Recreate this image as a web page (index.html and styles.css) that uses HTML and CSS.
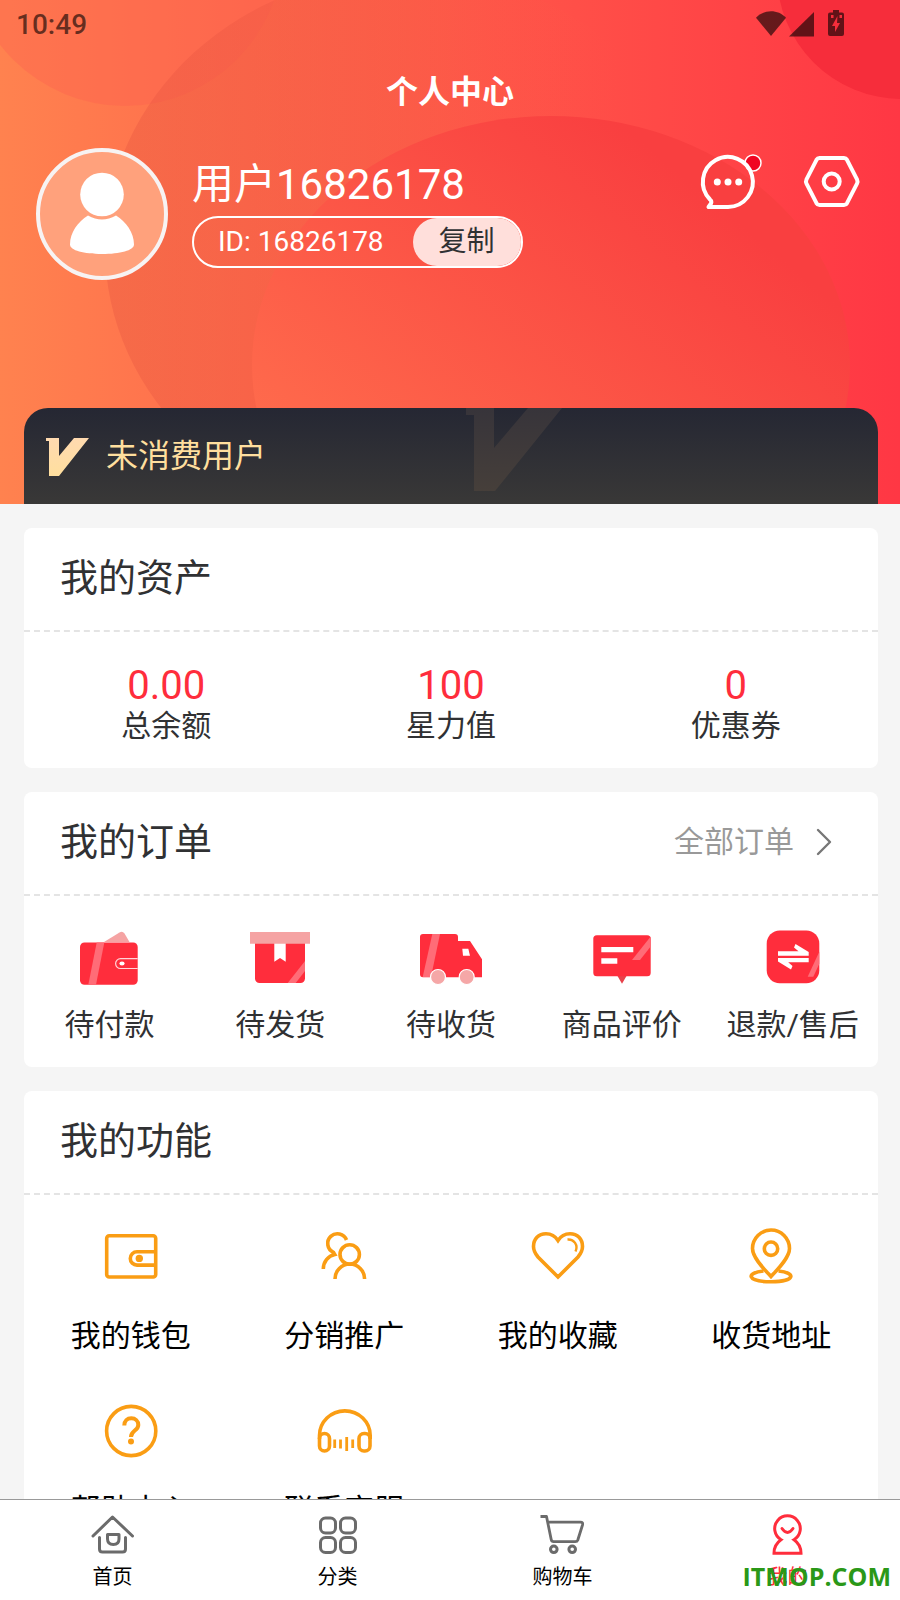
FILE: index.html
```
<!DOCTYPE html>
<html lang="zh-CN">
<head>
  <meta charset="UTF-8">
  <title>个人中心</title>
  <meta name="viewport" content="width=device-width, initial-scale=1.0">
  <link rel="stylesheet" href="styles.css">
</head>
<body>

  <div class="app">
    <main class="page">

      <header class="hero">
        <svg class="hero-bg" viewBox="0 0 900 504" preserveAspectRatio="none" aria-hidden="true">
          <defs>
            <linearGradient id="ring" x1="0" y1="0" x2="1" y2="0">
              <stop offset="0" stop-color="#e4523f" stop-opacity=".34"/>
              <stop offset=".5" stop-color="#f55a44" stop-opacity=".4"/>
              <stop offset=".85" stop-color="#ff5548" stop-opacity="0"/>
            </linearGradient>
            <linearGradient id="disc" x1=".1" y1=".8" x2=".75" y2=".15">
              <stop offset="0" stop-color="#ff6e4d"/>
              <stop offset="1" stop-color="#f93f40"/>
            </linearGradient>
          </defs>
          <circle cx="125" cy="-52" r="158" fill="#fb5f50" fill-opacity=".35"/>
          <ellipse cx="408" cy="248" rx="303" ry="276" fill="url(#ring)"/>
          <ellipse cx="551" cy="365" rx="299" ry="249" fill="url(#disc)"/>
          <circle cx="902" cy="-26" r="125" fill="#f62d3b"/>
        </svg>

        <div class="status">
          <span>10:49</span>
          <svg width="92" height="32" viewBox="754 8 92 32" aria-hidden="true">
            <path d="M771 36l-15-18.3c8-8.6 22-8.6 30 0z"/>
            <path d="M789 36.5h25V12z"/>
            <path fill-rule="evenodd" d="M833 10h6v2.500h3a2 2 0 0 1 2 2V34a2 2 0 0 1-2 2h-12a2 2 0 0 1-2-2V14.500a2 2 0 0 1 2-2h3zM831 15v3h2.500v-3zM839.500 15v3h2.500v-3zM837.500 16l-5.500 10h3v6l5-9h-3z"/>
          </svg>
        </div>

        <h1>个人中心</h1>

        <div class="user">
          <svg class="avatar" viewBox="0 0 132 132" role="img" aria-label="头像">
            <circle cx="66" cy="66" r="64" fill="#ffa17c" stroke="#f7f3f3" stroke-width="4"/>
            <circle cx="66" cy="46.500" r="21.800" fill="#fff"/>
            <path d="M52 67.500q14 8 28 0c10 6 18 17 18 29 0 6-14 9.500-32 9.500s-32-3.500-32-9.500c0-12 8-23 18-29z" fill="#fff"/>
          </svg>
          <div class="info">
            <div class="name">用户16826178</div>
            <div class="uid">
              <span>ID: 16826178</span>
              <button type="button">复制</button>
            </div>
          </div>
          <div class="actions">
            <a href="#" aria-label="消息">
              <svg width="64" height="64" viewBox="0 0 64 64" fill="none" stroke="#fff" stroke-width="4" stroke-linejoin="round">
                <circle cx="55" cy="13" r="8" fill="#f00522" stroke-width="1.500"/>
                <path d="M30 57a25 25 0 1 0-18-7.500q2 1.500 1 4l-2.500 3.500z"/>
                <g fill="#fff" stroke="none">
                  <circle cx="19.300" cy="32" r="3.500"/>
                  <circle cx="30" cy="32" r="3.500"/>
                  <circle cx="40.700" cy="32" r="3.500"/>
                </g>
              </svg>
            </a>
            <a href="#" aria-label="设置">
              <svg width="64" height="64" viewBox="0 0 64 64" fill="none" stroke="#fff" stroke-width="4" stroke-linejoin="round">
                <path d="M19.500 8h24.500q2 0 3 1.800l10 19.500q1 2.200 0 4.400l-10 19.500q-1 1.800-3 1.800h-24.500q-2 0-3-1.800l-10-19.500q-1-2.200 0-4.400l10-19.500q1-1.800 3-1.800z"/>
                <circle cx="31.700" cy="31.500" r="8"/>
              </svg>
            </a>
          </div>
        </div>

        <div class="vip">
          <svg class="vip-mark" width="96" height="83" viewBox="0 0 96 83" aria-hidden="true">
            <defs>
              <linearGradient id="mark" x1="0" y1="0" x2="0" y2="1">
                <stop offset="0" stop-color="#37343a"/>
                <stop offset="1" stop-color="#463f3a"/>
              </linearGradient>
              <linearGradient id="gold" x1="0" y1="0" x2="0" y2="1">
                <stop offset="0" stop-color="#ffdab0"/>
                <stop offset="1" stop-color="#ffdf9e"/>
              </linearGradient>
            </defs>
            <path d="M0 0h28v40L62 0h34L29 83H8V7H0z" fill="url(#mark)"/>
          </svg>
          <svg width="44" height="38" viewBox="0 0 44 38" aria-hidden="true">
            <path d="M0 0h13v18L28 0h15L13 38H3V3H0z" fill="url(#gold)"/>
          </svg>
          <span>未消费用户</span>
        </div>
      </header>

      <section class="card">
        <div class="card-head"><h2>我的资产</h2></div>
        <div class="assets">
          <div><strong>0.00</strong><span>总余额</span></div>
          <div><strong>100</strong><span>星力值</span></div>
          <div><strong>0</strong><span>优惠券</span></div>
        </div>
      </section>

      <section class="card">
        <div class="card-head">
          <h2>我的订单</h2>
          <a href="#" class="more">全部订单
            <svg width="16" height="28" viewBox="0 0 16 28" fill="none" stroke="#777" stroke-width="2.400" stroke-linecap="round" stroke-linejoin="round"><path d="M2 2l12 12L2 26"/></svg>
          </a>
        </div>
        <nav class="orders">
          <a href="#">
            <svg viewBox="0 0 64 64">
              <path d="M27 14L42.500 4.500q3-1.800 5 1L52.500 14z" fill="#f5a3a3"/>
              <rect x="3" y="14.500" width="57.700" height="42.300" rx="4.500" fill="#ff2d3c"/>
              <path d="M19.700 14.500h7.600L19 56.800h-7.700z" fill="#ff6c77"/>
              <path d="M60.700 30.700H43.500a4.900 4.900 0 0 0 0 9.800h17.200" fill="none" stroke="#ffd5d8" stroke-width="1.200"/>
              <ellipse cx="45" cy="35.400" rx="2.600" ry="2" fill="#fff"/>
            </svg>
            待付款
          </a>
          <a href="#">
            <svg viewBox="0 0 64 64">
              <path d="M7 15h50v35.500a4.500 4.500 0 0 1-4.500 4.500h-41A4.500 4.500 0 0 1 7 50.500z" fill="#ff2d3c"/>
              <path d="M57 33v10l-9.300 12h-8z" fill="#ff6c77"/>
              <path d="M26.300 15h11.400v18.700L32 30l-5.700 3.700z" fill="#fff"/>
              <path d="M2 4h60v11.700H2z" fill="#f5a3a3"/>
            </svg>
            待发货
          </a>
          <a href="#">
            <svg viewBox="0 0 64 64">
              <path d="M4 6h32a3 3 0 0 1 3 3v4h12l12 18.300v18H4a3 3 0 0 1-3-3V9a3 3 0 0 1 3-3z" fill="#ff2d3c"/>
              <path d="M13.300 6H21l-9 43H3.700z" fill="#ff6c77"/>
              <path d="M43.300 20.700h6l1.700 7h-7z" fill="#fff"/>
              <circle cx="19" cy="49" r="7.500" fill="#f5a7a7" stroke="#fff" stroke-width="1.200"/>
              <circle cx="47.700" cy="49" r="7.500" fill="#f5a7a7" stroke="#fff" stroke-width="1.200"/>
            </svg>
            待收货
          </a>
          <a href="#">
            <svg viewBox="0 0 64 64">
              <path d="M27.500 48h9L32 55.700z" fill="#e8414a"/>
              <rect x="3.300" y="7.300" width="57.400" height="41" rx="3.500" fill="#ff2d3c"/>
              <path d="M60.700 8.500v10L50 32h-8z" fill="#ff6c77"/>
              <path d="M11.300 19h32v5.300h-32zM11.300 30.300h16v5.400h-16z" fill="#fff"/>
            </svg>
            商品评价
          </a>
          <a href="#">
            <svg viewBox="0 0 64 64">
              <rect x="5.700" y="2.500" width="52.600" height="52.800" rx="13" fill="#ff2d3c"/>
              <path d="M58.300 23.700v12l-6 13h-5.600z" fill="#ff6c77"/>
              <path d="M17 23.300h20.500L33 19.500l1.500-3.500 13.200 8v3.700H17zM47.700 34.300H27.200l4.300 3.800L30 41.600l-13-8V30h30.700z" fill="#fff"/>
            </svg>
            退款/售后
          </a>
        </nav>
      </section>

      <section class="card">
        <div class="card-head"><h2>我的功能</h2></div>
        <nav class="tools">
          <a href="#">
            <svg viewBox="0 0 60 60">
              <rect x="5.700" y="8.700" width="49" height="41.300" rx="2.500"/>
              <path d="M54.700 24.700H36a6.700 6.700 0 0 0 0 13.400h18.700"/>
              <circle class="solid" cx="38.300" cy="31.400" r="3.700"/>
            </svg>
            我的钱包
          </a>
          <a href="#">
            <svg viewBox="0 0 60 60">
              <circle cx="35.700" cy="27.500" r="9.700"/>
              <path d="M21 52a14.800 15 0 0 1 29.600 0"/>
              <path d="M32.500 13a9.700 9.700 0 1 0-13 12.300l1.300 2.300C14 29 9.300 35 9.300 42"/>
            </svg>
            分销推广
          </a>
          <a href="#">
            <svg viewBox="0 0 60 60">
              <path d="M30 13.500C26.500 8 22 6.700 18 6.700 10.500 6.700 5.500 12 5.500 19.500c0 4.500 2 7.500 4.500 10.500l20 20 20-20c2.500-3 4.500-6 4.500-10.500 0-7.500-5-12.800-12.500-12.800-4 0-8.500 1.300-12 6.800z"/>
              <path stroke-width="2.400" d="M39.500 12.500c6.500-.5 11 5.500 8 12"/>
            </svg>
            我的收藏
          </a>
          <a href="#">
            <svg viewBox="0 0 60 60">
              <path d="M30 49.500C24 43 11.500 31 11.500 21.500a18.500 18.500 0 0 1 37 0C48.500 31 36 43 30 49.500z"/>
              <circle cx="30" cy="21.700" r="6.700"/>
              <path d="M22.500 44C5 45.500 5 54.800 30 54.800S55 45.500 37.500 44"/>
            </svg>
            收货地址
          </a>
          <a href="#">
            <svg viewBox="0 0 60 60">
              <circle cx="30.200" cy="30" r="24.600"/>
              <path stroke-width="4" d="M23.300 24.500c0-4.500 3-7.200 7-7.200s7 2.700 7 6.600c0 5.600-7.300 5.800-7.300 12"/>
              <circle class="solid" cx="30" cy="40.500" r="3"/>
            </svg>
            帮助中心
          </a>
          <a href="#">
            <svg viewBox="0 0 60 60">
              <path d="M5.500 38v-3.500a25.300 24.600 0 0 1 50.700 0V38"/>
              <rect x="5.500" y="32.500" width="10" height="17.500" rx="5"/>
              <rect x="45" y="32.500" width="11" height="17.500" rx="5"/>
              <path stroke-width="2.800" d="M20.700 38.500V47M26.500 38.500v9M32.700 36v14M38.700 38.500V47"/>
            </svg>
            联系客服
          </a>
        </nav>
      </section>

    </main>

    <nav class="tabbar">
      <a href="#">
        <svg viewBox="0 0 48 48">
          <path d="M4 25L23.500 6 43.500 25M10.500 26.500V38q0 3 3 3h20q3 0 3-3V26.500"/>
          <path d="M18.500 23.500H30V28q0 5.500-5.700 5.500T18.500 28z"/>
        </svg>
        首页
      </a>
      <a href="#">
        <svg viewBox="0 0 48 48">
          <rect x="6.500" y="7" width="15" height="15" rx="5"/>
          <rect x="26.500" y="7" width="15" height="15" rx="5"/>
          <rect x="6.500" y="26.500" width="15" height="15" rx="5"/>
          <rect x="26.500" y="26.500" width="15" height="15" rx="5"/>
        </svg>
        分类
      </a>
      <a href="#">
        <svg viewBox="0 0 48 48">
          <path stroke-width="2.800" stroke-linecap="butt" d="M1.500 5.500h6l4.700 23q.4 2.200 2.500 2.200h21.500q2 0 2.600-1.700l4.700-15q.8-2.800-2-2.800H9"/>
          <circle cx="14.800" cy="38.300" r="3.300"/>
          <circle cx="33.200" cy="38.300" r="3.300"/>
        </svg>
        购物车
      </a>
      <a href="#" class="active">
        <svg viewBox="0 0 48 48">
          <path stroke-linejoin="miter" d="M17 28.700a12.800 12.800 0 1 1 13 0c5 3.500 7 8 7 13.500H10c0-5.500 2-10 7-13.500z"/>
          <path d="M18 17.500q5.500 8 11 0"/>
        </svg>
        我的
      </a>
      <div class="watermark">ITMOP.COM</div>
    </nav>
  </div>

</body>
</html>
```
FILE: styles.css
```
* {
  box-sizing: border-box;
}

body {
  margin: 0;
  background: #f5f5f5;
  color: #303133;
  font-family: Roboto, "Noto Sans CJK SC", sans-serif;
}

h1,
h2 {
  margin: 0;
}

a {
  color: inherit;
  text-decoration: none;
}

svg {
  display: block;
  flex-shrink: 0;
}

.app {
  display: flex;
  flex-direction: column;
  height: 100vh;
}

/* Scrolling area above the tab bar */
.page {
  flex: 1;
  min-height: 0;
  overflow-y: auto;
  scrollbar-width: none;
}

/* Red header */
.hero {
  position: relative;
  z-index: 0;
  background: linear-gradient(to right, #ff824f, #ff5549 55%, #ff3744);
  color: #fff;
}

.hero-bg {
  position: absolute;
  inset: 0;
  width: 100%;
  height: 100%;
  z-index: -1;
}

.status {
  display: flex;
  justify-content: space-between;
  align-items: center;
  height: 48px;
  padding: 0 54px 0 16px;
  font-size: 28px;
  font-weight: 500;
  line-height: 32px;
  color: rgba(0, 0, 0, 0.6);
}

.status span {
  padding-top: 2px;
}

.status svg {
  fill: rgba(0, 0, 0, 0.6);
}

h1 {
  text-align: center;
  font-size: 32px;
  font-weight: bold;
  line-height: 88px;
}

.user {
  display: flex;
  align-items: flex-start;
  gap: 24px;
  padding: 12px 36px 128px;
}

.avatar {
  width: 132px;
  height: 132px;
}

.info {
  padding-top: 8px;
}

.name {
  font-size: 42px;
  line-height: 58px;
}

.uid {
  display: flex;
  align-items: stretch;
  height: 52px;
  margin-top: 2px;
  padding-left: 24px;
  border: 2px solid #fff;
  border-radius: 26px;
  font-size: 28px;
  line-height: 48px;
}

.uid button {
  margin-left: 29px;
  padding: 0 26px;
  border: none;
  border-radius: 24px;
  background: #ffdfdb;
  color: #303133;
  font: inherit;
  cursor: pointer;
}

.actions {
  display: flex;
  gap: 38px;
  margin-left: auto;
  padding-top: 2px;
}

.vip {
  position: relative;
  display: flex;
  align-items: center;
  gap: 16px;
  height: 96px;
  margin: 0 22px 0 24px;
  padding: 2px 22px 0;
  border-radius: 24px 24px 0 0;
  background: linear-gradient(#252733, #393837);
  color: #ffdf9e;
  font-size: 32px;
  line-height: 40px;
}

.vip span {
  padding-bottom: 2px;
}

.vip-mark {
  position: absolute;
  top: 0;
  right: 316px;
}

/* White cards */
.card {
  margin: 24px 22px 0 24px;
  border-radius: 8px;
  background: #fff;
}

.card-head {
  display: flex;
  justify-content: space-between;
  align-items: center;
  height: 104px;
  padding: 0 46px 2px 36px;
  border-bottom: 2px dashed #e4e4e4;
}

h2 {
  font-size: 38px;
  font-weight: normal;
  line-height: 48px;
}

.more {
  display: flex;
  align-items: center;
  gap: 22px;
  font-size: 30px;
  line-height: 40px;
  color: #999;
}

.assets,
.orders,
.tools {
  display: grid;
  text-align: center;
  font-size: 30px;
  line-height: 40px;
}

.assets {
  grid-template-columns: repeat(3, 1fr);
  padding: 32px 0 24px;
}

.assets strong,
.assets span {
  display: block;
}

.assets strong {
  font-size: 40px;
  font-weight: normal;
  line-height: 44px;
  color: #ff2d3c;
}

.assets span {
  line-height: 36px;
}

.orders {
  grid-template-columns: repeat(5, 1fr);
  padding: 32px 0 22px;
}

.orders svg {
  width: 64px;
  height: 64px;
  margin: 0 auto 13px;
}

.tools {
  grid-template-columns: repeat(4, 1fr);
  row-gap: 45px;
  padding: 32px 0;
  color: #000;
}

.tools svg {
  width: 60px;
  height: 60px;
  margin: 0 auto 29px;
  fill: none;
  stroke: #fa9d14;
  stroke-width: 3.6;
}

.tools .solid {
  fill: #fa9d14;
  stroke: none;
}

/* Bottom tab bar */
.tabbar {
  position: relative;
  display: flex;
  padding: 11px 0;
  border-top: 1px solid #999;
  background: #fff;
  color: #000;
  font-size: 20px;
  line-height: 24px;
  text-align: center;
}

.tabbar a {
  flex: 1;
}

.tabbar svg {
  width: 48px;
  height: 48px;
  margin: 0 auto 6px;
  fill: none;
  stroke: #6b6b6b;
  stroke-width: 3;
  stroke-linecap: round;
  stroke-linejoin: round;
}

.tabbar .active {
  color: #ff2d3c;
}

.tabbar .active svg {
  stroke: #ff2d3c;
}

.watermark {
  position: absolute;
  right: 9px;
  bottom: 12px;
  font-family: "Open Sans", sans-serif;
  font-size: 25px;
  font-weight: bold;
  color: #2a9818;
}
```
